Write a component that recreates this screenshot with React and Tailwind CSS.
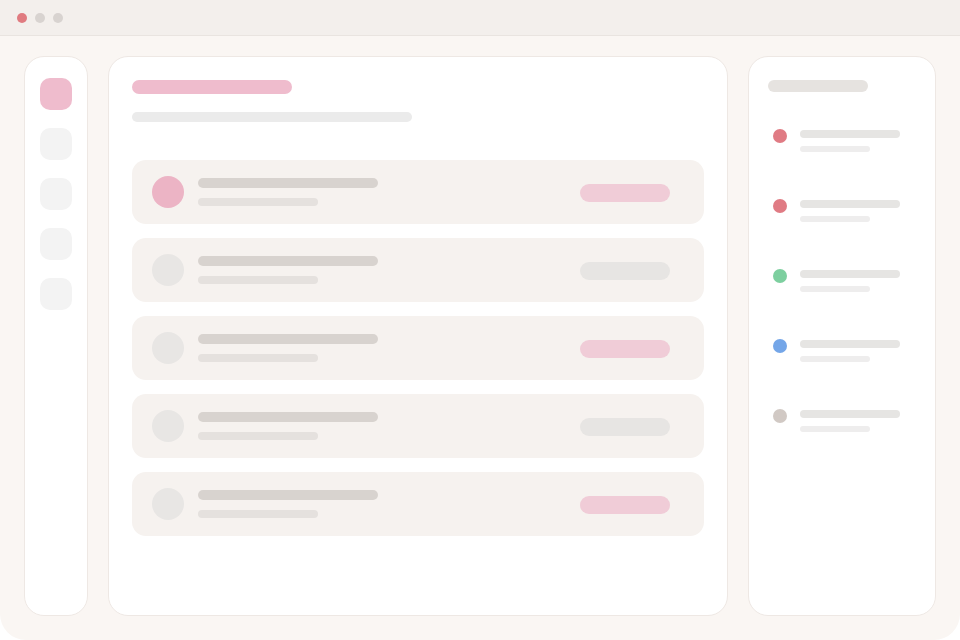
import React from 'react';

const rows = [
  { avatar: 'bg-[#ecb4c5]', pill: 'bg-[#f0ccd7]' },
  { avatar: 'bg-[#e8e6e4]', pill: 'bg-[#e7e5e3]' },
  { avatar: 'bg-[#e8e6e4]', pill: 'bg-[#f0ccd7]' },
  { avatar: 'bg-[#e8e6e4]', pill: 'bg-[#e7e5e3]' },
  { avatar: 'bg-[#e8e6e4]', pill: 'bg-[#f0ccd7]' },
];

const activity = [
  'bg-[#e07b84]',
  'bg-[#e07b84]',
  'bg-[#7dcf9f]',
  'bg-[#74a6e8]',
  'bg-[#d1c9c4]',
];

function TitleBar() {
  return (
    <div className="h-[36px] shrink-0 flex items-center gap-[8px] pl-[17px] bg-[#f3efec] border-b border-[#e9e4e0]">
      <span className="w-[10px] h-[10px] rounded-full bg-[#e07b80]" />
      <span className="w-[10px] h-[10px] rounded-full bg-[#d8d3d0]" />
      <span className="w-[10px] h-[10px] rounded-full bg-[#d8d3d0]" />
    </div>
  );
}

function Sidebar() {
  return (
    <div className="w-[64px] shrink-0 bg-white border border-[#eee8e4] rounded-[20px] flex flex-col items-center gap-[18px] pt-[21px]">
      <div className="w-[32px] h-[32px] rounded-[10px] bg-[#efbccd]" />
      <div className="w-[32px] h-[32px] rounded-[10px] bg-[#f3f3f3]" />
      <div className="w-[32px] h-[32px] rounded-[10px] bg-[#f3f3f3]" />
      <div className="w-[32px] h-[32px] rounded-[10px] bg-[#f3f3f3]" />
      <div className="w-[32px] h-[32px] rounded-[10px] bg-[#f3f3f3]" />
    </div>
  );
}

function MainPanel() {
  return (
    <div className="w-[620px] shrink-0 bg-white border border-[#eee8e4] rounded-[20px] pt-[23px] pl-[23px]">
      <div className="w-[160px] h-[14px] rounded-full bg-[#efbccd]" />
      <div className="w-[280px] h-[10px] rounded-full bg-[#ebebeb] mt-[18px]" />
      <div className="flex flex-col gap-[14px] mt-[38px] w-[572px]">
        {rows.map((r, i) => (
          <div key={i} className="h-[64px] rounded-[14px] bg-[#f6f2ef] flex items-center pl-[20px] pr-[34px]">
            <div className={`w-[32px] h-[32px] rounded-full ${r.avatar}`} />
            <div className="ml-[14px] flex flex-col gap-[10px]">
              <div className="w-[180px] h-[10px] rounded-full bg-[#d8d3cf]" />
              <div className="w-[120px] h-[8px] rounded-full bg-[#e5e1de]" />
            </div>
            <div className={`ml-auto mt-[2px] w-[90px] h-[18px] rounded-full ${r.pill}`} />
          </div>
        ))}
      </div>
    </div>
  );
}

function ActivityPanel() {
  return (
    <div className="w-[188px] shrink-0 bg-white border border-[#eee8e4] rounded-[20px] pt-[23px] pl-[19px]">
      <div className="w-[100px] h-[12px] rounded-full bg-[#e6e3e0]" />
      <div className="flex flex-col gap-[48px] mt-[38px]">
        {activity.map((c, i) => (
          <div key={i} className="flex items-start">
            <span className={`w-[14px] h-[14px] rounded-full ml-[5px] -mt-[1px] ${c}`} />
            <div className="ml-[13px] flex flex-col gap-[8px]">
              <div className="w-[100px] h-[8px] rounded-full bg-[#e6e5e3]" />
              <div className="w-[70px] h-[6px] rounded-full bg-[#eeeded]" />
            </div>
          </div>
        ))}
      </div>
    </div>
  );
}

export default function App() {
  return (
    <div className="w-[960px] h-[640px] bg-white overflow-hidden">
      <div className="w-full h-full flex flex-col bg-[#faf6f3] rounded-b-[26px] overflow-hidden">
        <TitleBar />
        <div className="flex-1 flex gap-[20px] pt-[20px] pb-[24px] pl-[24px]">
          <Sidebar />
          <MainPanel />
          <ActivityPanel />
        </div>
      </div>
    </div>
  );
}
